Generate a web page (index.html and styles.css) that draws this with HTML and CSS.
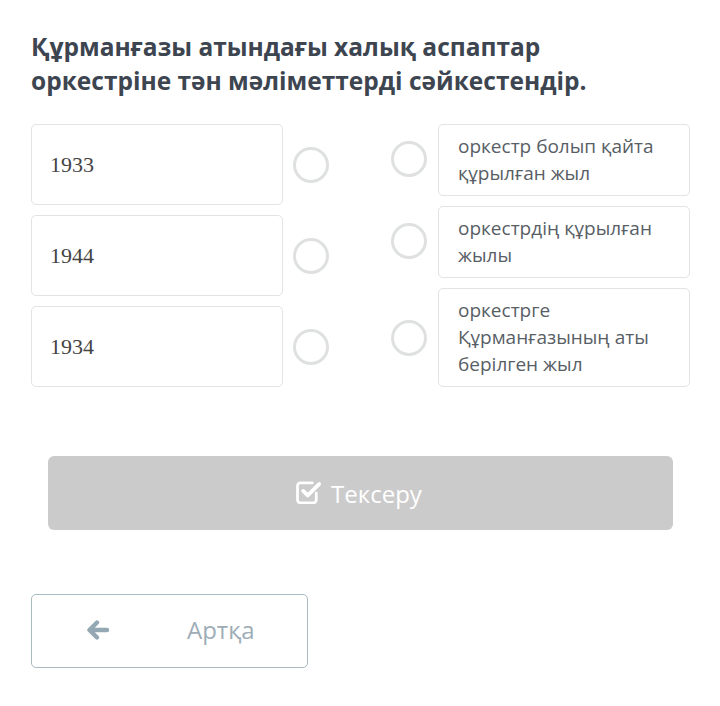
FILE: index.html
```html
<!DOCTYPE html>
<html>
<head>
<meta charset="utf-8">
<link rel="stylesheet" href="styles.css">
</head>
<body>
<div class="page">
  <h1 class="title">Құрманғазы атындағы халық аспаптар оркестріне тән мәліметтерді сәйкестендір.</h1>
  <div class="match">
    <div class="col-left">
      <div class="row-left"><div class="card card-num">1933</div><span class="radio"></span></div>
      <div class="row-left"><div class="card card-num">1944</div><span class="radio"></span></div>
      <div class="row-left"><div class="card card-num">1934</div><span class="radio"></span></div>
    </div>
    <div class="col-right">
      <div class="row-right r1"><span class="radio"></span><div class="card card-text">оркестр болып қайта құрылған жыл</div></div>
      <div class="row-right r2"><span class="radio"></span><div class="card card-text">оркестрдің құрылған жылы</div></div>
      <div class="row-right r3"><span class="radio"></span><div class="card card-text">оркестрге Құрманғазының аты берілген жыл</div></div>
    </div>
  </div>
  <div class="check-wrap">
    <button class="check-btn">
      <svg class="check-icon" viewBox="0 0 26 22" width="30" height="25">
        <path d="M18.5 12.5V18.5a2.5 2.5 0 0 1-2.5 2.5H4.5a2.5 2.5 0 0 1-2.5-2.5V6a2.5 2.5 0 0 1 2.5-2.5H15" fill="none" stroke="#fff" stroke-width="2.4" stroke-linecap="round"/>
        <path d="M7 10.5l4 4 10-10" fill="none" stroke="#fff" stroke-width="3.4" stroke-linecap="round" stroke-linejoin="round"/>
      </svg>
      <span>Тексеру</span>
    </button>
  </div>
  <button class="back-btn">
    <svg class="back-icon" viewBox="0 0 24 20" width="24" height="20">
      <path d="M11 2.5L3.5 10 11 17.5M4 10h17" fill="none" stroke="#93a8b3" stroke-width="4.4" stroke-linecap="round" stroke-linejoin="round"/>
    </svg>
    <span class="back-text">Артқа</span>
  </button>
</div>
</body>
</html>
```

FILE: styles.css
```css
html, body {
  margin: 0;
  padding: 0;
  background: #ffffff;
}
.page {
  padding: 30px 30px 0 31px;
  font-family: "Open Sans", "Noto Sans", sans-serif;
}
.title {
  margin: 0;
  font-size: 24.5px;
  line-height: 34px;
  font-weight: 700;
  color: #3d4550;
  width: 620px;
}
.match {
  display: flex;
  justify-content: space-between;
  margin-top: 26px;
  width: 659px;
}
.col-left, .col-right {
  display: flex;
  flex-direction: column;
  gap: 10px;
}
.row-left {
  display: flex;
  align-items: center;
  gap: 10px;
}
.row-right {
  display: flex;
  align-items: center;
  gap: 11px;
}
.card {
  width: 252px;
  box-sizing: border-box;
  border: 1px solid #e3e3e3;
  border-radius: 5px;
  background: #fff;
}
.card-num {
  height: 81px;
  display: flex;
  align-items: center;
  padding-left: 18px;
  font-family: "Liberation Serif", serif;
  font-size: 22px;
  color: #444;
}
.card-text {
  padding: 8px 8px 8px 19px;
  font-size: 19px;
  line-height: 27px;
  color: #585e65;
}
.radio {
  width: 36px;
  height: 36px;
  box-sizing: border-box;
  border: 3px solid #dfe1e1;
  border-radius: 50%;
  flex: none;
}
.r1 .radio, .r2 .radio { margin-top: -2px; }
.check-wrap {
  margin-top: 69px;
  padding-left: 17px;
}
.check-btn {
  width: 625px;
  height: 74px;
  border: none;
  border-radius: 6px;
  background: #cbcbcb;
  color: #fff;
  font-family: "Open Sans", sans-serif;
  font-size: 24px;
  display: flex;
  align-items: center;
  justify-content: center;
  gap: 6px;
  padding: 0 4px 0 0;
}
.check-icon { margin-top: -3px; }
.back-btn {
  margin-top: 64px;
  width: 277px;
  height: 74px;
  border: 1px solid #a9bac2;
  border-radius: 5px;
  background: #fff;
  display: flex;
  align-items: center;
  padding: 0 0 3px 54px;
  font-family: "Open Sans", sans-serif;
  font-size: 24px;
  color: #9eadb6;
}
.back-icon { margin-top: 0; }
.back-text { margin-left: 77px; }
```
